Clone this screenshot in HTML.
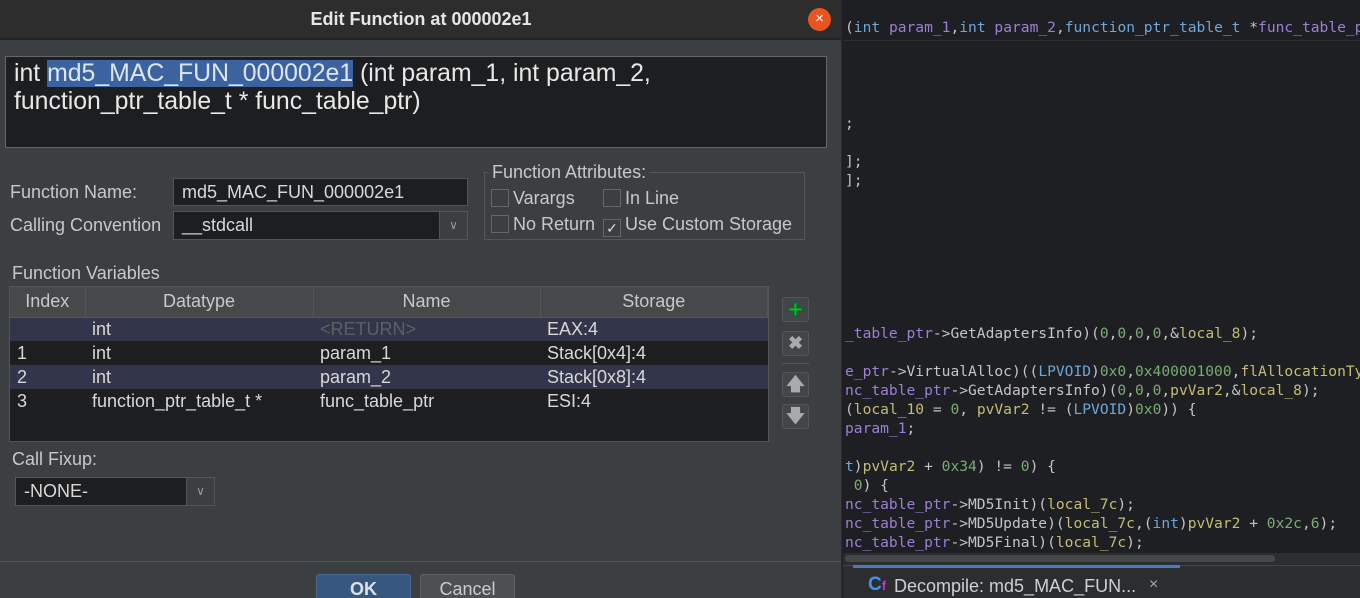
<!DOCTYPE html>
<html><head><meta charset="utf-8"><style>
*{box-sizing:border-box;margin:0;padding:0}
html,body{width:1360px;height:598px;overflow:hidden}
body{background:#1e1f22;font-family:"Liberation Sans",sans-serif;position:relative}
.abs{position:absolute}
#dlg{left:0;top:0;width:842px;height:598px;background:#3c3f41;border-right:1px solid #2a2a2a;overflow:hidden}
#title{left:0;top:0;width:842px;height:40px;background:#2d2d2d;border-bottom:2px solid #222;color:#e6e6e6;font-weight:bold;font-size:18px;text-align:center;line-height:38px}
.close{left:808px;top:8px;width:23px;height:23px;border-radius:50%;background:#e95420;color:#fff;font-size:15px;text-align:center;line-height:22px}
#sig{left:5px;top:56px;width:822px;height:92px;background:#1d1e20;border:1px solid #666;color:#e8e8e8;font-size:24.8px;line-height:28px;padding:3px 8px;white-space:nowrap}
.sel{background:#3d62a0;color:#dbe6f7}
.lbl{color:#c8c8c8;font-size:18px}
.field{background:#1d1e20;border:1px solid #555;color:#d8d8d8;font-size:18px;padding-left:8px}
.cb{width:18px;height:18px;border:1px solid #666;background:#3c3f41;display:inline-block;vertical-align:-3px;margin-right:4px;font-size:14px;line-height:16px;text-align:center;color:#ddd}
table{border-collapse:collapse;font-size:18px;color:#d8d8d8}
th{background:#45494a;font-weight:normal;color:#c8c8c8;height:30px;border-right:1px solid #555;border-bottom:1px solid #555}
td{height:24px;padding-left:7px}
.btn{width:27px;height:25px;border:1px solid #555;border-radius:3px;background:#434648;color:#aaa;text-align:center;font-weight:bold}
#code{left:843px;top:0;width:517px;height:560px;font-family:"DejaVu Sans Mono",monospace;font-size:14.6px;color:#c4c4c4;overflow:hidden}
#code div{position:absolute;left:2px;white-space:pre}
.p{color:#9d7fd6}.t{color:#6fa6d8}.y{color:#c4bd73}.g{color:#7aac74}
</style></head><body>
<div id="code" class="abs">
<div class="abs" style="left:0;top:0;width:517px;height:41px;background:#1e1f22;border-bottom:1px solid #2c2d30"></div>
<div style="top:19px">(<span class="t">int</span> <span class="p">param_1</span>,<span class="t">int</span> <span class="p">param_2</span>,<span class="t">function_ptr_table_t</span> *<span class="p">func_table_p</span></div>
<div style="top:115px">;</div>
<div style="top:153px">];</div>
<div style="top:172px">];</div>
<div style="top:325px"><span class="p">_table_ptr</span>-&gt;GetAdaptersInfo)(<span class="g">0</span>,<span class="g">0</span>,<span class="g">0</span>,<span class="g">0</span>,&amp;<span class="y">local_8</span>);</div>
<div style="top:363px"><span class="p">e_ptr</span>-&gt;VirtualAlloc)((<span class="t">LPVOID</span>)<span class="g">0x0</span>,<span class="g">0x400001000</span>,<span class="y">flAllocationTy</span></div>
<div style="top:382px"><span class="p">nc_table_ptr</span>-&gt;GetAdaptersInfo)(<span class="g">0</span>,<span class="g">0</span>,<span class="g">0</span>,<span class="y">pvVar2</span>,&amp;<span class="y">local_8</span>);</div>
<div style="top:401px">(<span class="y">local_10</span> = <span class="g">0</span>, <span class="y">pvVar2</span> != (<span class="t">LPVOID</span>)<span class="g">0x0</span>)) {</div>
<div style="top:420px"><span class="p">param_1</span>;</div>
<div style="top:458px"><span class="t">t</span>)<span class="y">pvVar2</span> + <span class="g">0x34</span>) != <span class="g">0</span>) {</div>
<div style="top:477px"> <span class="g">0</span>) {</div>
<div style="top:496px"><span class="p">nc_table_ptr</span>-&gt;MD5Init)(<span class="y">local_7c</span>);</div>
<div style="top:515px"><span class="p">nc_table_ptr</span>-&gt;MD5Update)(<span class="y">local_7c</span>,(<span class="t">int</span>)<span class="y">pvVar2</span> + <span class="g">0x2c</span>,<span class="g">6</span>);</div>
<div style="top:534px"><span class="p">nc_table_ptr</span>-&gt;MD5Final)(<span class="y">local_7c</span>);</div>
</div>
<div class="abs" style="left:843px;top:553px;width:517px;height:12px;background:#2b2d30"></div>
<div class="abs" style="left:845px;top:555px;width:430px;height:7px;background:#45484b;border-radius:4px"></div>
<div class="abs" style="left:843px;top:565px;width:517px;height:33px;background:#2b2d30;border-top:1px solid #444"></div>
<div class="abs" style="left:853px;top:565px;width:327px;height:3px;background:#4a7ab8"></div>
<div class="abs" style="left:868px;top:574px;color:#4a8fe6;font-weight:bold;font-size:19px">C<span style="color:#d02ad0;font-size:13px">f</span></div>
<div class="abs" style="left:894px;top:576px;color:#cfcfcf;font-size:18px">Decompile: md5_MAC_FUN...</div>
<div class="abs" style="left:1149px;top:576px;color:#aaa;font-size:16px">×</div>

<div id="dlg" class="abs">
<div id="title" class="abs">Edit Function at 000002e1</div>
<div class="close abs">×</div>
<div id="sig" class="abs">int <span class="sel">md5_MAC_FUN_000002e1</span> (int param_1, int param_2,<br>function_ptr_table_t * func_table_ptr)</div>

<div class="abs lbl" style="left:10px;top:182px">Function Name:</div>
<div class="abs field" style="left:173px;top:178px;width:295px;height:28px;line-height:26px">md5_MAC_FUN_000002e1</div>
<div class="abs lbl" style="left:10px;top:215px">Calling Convention</div>
<div class="abs field" style="left:173px;top:211px;width:295px;height:29px;line-height:27px">__stdcall<span style="position:absolute;right:0;top:0;width:28px;height:27px;border-left:1px solid #555;background:#3c3f41;color:#999;text-align:center;font-size:12px">∨</span></div>

<div class="abs" style="left:484px;top:172px;width:321px;height:68px;border:1px solid #555"></div>
<div class="abs lbl" style="left:489px;top:162px;background:#3c3f41;padding:0 3px">Function Attributes:</div>
<div class="abs lbl" style="left:491px;top:188px"><span class="cb"></span>Varargs</div>
<div class="abs lbl" style="left:603px;top:188px"><span class="cb"></span>In Line</div>
<div class="abs lbl" style="left:491px;top:214px"><span class="cb"></span>No Return</div>
<div class="abs lbl" style="left:603px;top:214px"><span class="cb">✓</span>Use Custom Storage</div>

<div class="abs lbl" style="left:12px;top:263px">Function Variables</div>
<div class="abs" style="left:9px;top:286px;width:760px;height:156px;background:#1d1e20;border:1px solid #555">
<table style="width:758px">
<tr><th style="width:75px">Index</th><th style="width:228px">Datatype</th><th style="width:227px">Name</th><th>Storage</th></tr>
<tr style="background:#33354a"><td></td><td>int</td><td style="color:#5c5f66">&lt;RETURN&gt;</td><td>EAX:4</td></tr>
<tr><td>1</td><td>int</td><td>param_1</td><td>Stack[0x4]:4</td></tr>
<tr style="background:#33354a"><td>2</td><td>int</td><td>param_2</td><td>Stack[0x8]:4</td></tr>
<tr><td>3</td><td>function_ptr_table_t *</td><td>func_table_ptr</td><td>ESI:4</td></tr>
</table></div>
<div class="abs btn" style="left:782px;top:297px;color:#11c011;font-size:26px;line-height:22px;-webkit-text-stroke:1px #063">+</div>
<div class="abs btn" style="left:782px;top:331px;font-size:18px;line-height:23px">✖</div>
<div class="abs" style="left:782px;top:363px;width:27px;height:1px;background:#555"></div>
<div class="abs btn" style="left:782px;top:372px;font-size:18px;line-height:23px">🡅</div>
<div class="abs btn" style="left:782px;top:404px;font-size:18px;line-height:23px">🡇</div>

<div class="abs lbl" style="left:12px;top:449px">Call Fixup:</div>
<div class="abs field" style="left:15px;top:477px;width:200px;height:29px;line-height:27px;border-color:#555">-NONE-<span style="position:absolute;right:0;top:0;width:28px;height:27px;border-left:1px solid #555;background:#3c3f41;color:#999;text-align:center;font-size:12px">∨</span></div>

<div class="abs" style="left:0;top:561px;width:842px;height:1px;background:#555"></div>
<div class="abs" style="left:316px;top:574px;width:95px;height:30px;background:#365880;border:1px solid #4a6a95;border-radius:3px;color:#e0e0e0;font-weight:bold;font-size:18px;text-align:center;line-height:28px">OK</div>
<div class="abs" style="left:420px;top:574px;width:95px;height:30px;background:#4c5052;border:1px solid #5e6163;border-radius:3px;color:#ccc;font-size:18px;text-align:center;line-height:28px">Cancel</div>
</div>
</body></html>
